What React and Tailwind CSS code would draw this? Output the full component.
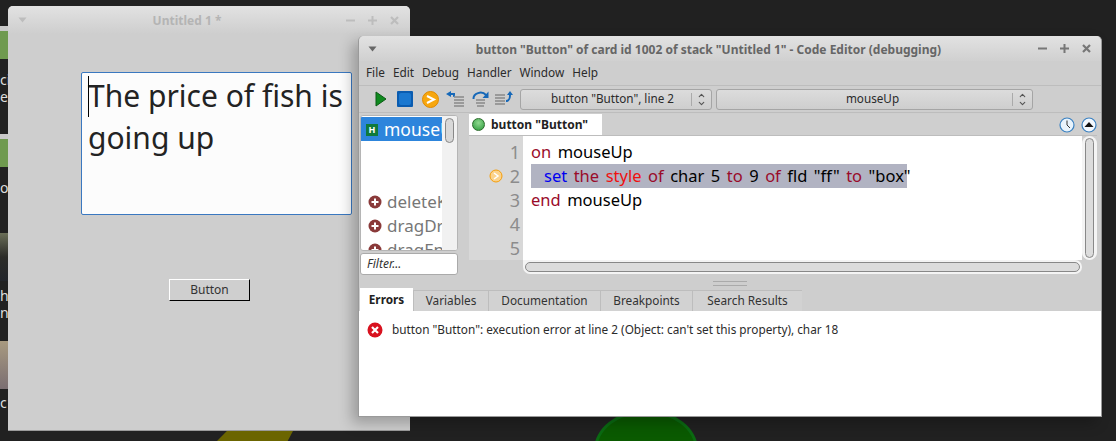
import React from "react";
import { ChevronDown, ChevronUp } from "lucide-react";

const noto = "font-['Noto_Sans',sans-serif]";

const WindowControls = ({ tone }) => (
  <div className={`flex items-center gap-[11px] ${tone}`}>
    <svg width="11" height="11" viewBox="0 0 11 11"><rect x="1" y="4.5" width="9" height="2" fill="currentColor" /></svg>
    <svg width="11" height="11" viewBox="0 0 11 11"><path d="M1 4.5h3.5V1h2v3.5H10v2H6.5V10h-2V6.5H1z" fill="currentColor" /></svg>
    <svg width="11" height="11" viewBox="0 0 11 11"><path d="M2 2l7 7M9 2l-7 7" stroke="currentColor" strokeWidth="2.2" /></svg>
  </div>
);

const MenuArrow = ({ color }) => (
  <svg width="9" height="6" viewBox="0 0 9 6"><path d="M0.5 0.5h8L4.5 5.5z" fill={color} /></svg>
);

const Stepper = () => (
  <div className="flex flex-col items-center text-[#555]">
    <ChevronUp size={9} strokeWidth={3} className="-mb-[1px]" />
    <ChevronDown size={9} strokeWidth={3} />
  </div>
);

const Select = ({ label, width, pad }) => (
  <div className={`flex h-[21px] items-center rounded-[3px] border border-[#a5a5a5] bg-gradient-to-b from-[#dcdcdc] to-[#cecece] ${width}`}>
    <span className={`flex-1 text-center text-[11.7px] text-[#2b2b2b] ${pad}`}>{label}</span>
    <div className="flex h-[13px] w-[20px] items-center justify-center border-l border-[#aaa]">
      <Stepper />
    </div>
  </div>
);

const ToolbarIcons = () => (
  <div className="flex w-[157px] items-center pl-[16px]">
    <svg width="12" height="16" viewBox="0 0 12 16"><path d="M1 1l10 7-10 7z" fill="#0f8a1f" stroke="#0b5c14" /></svg>
    <svg width="16" height="16" viewBox="0 0 16 16" className="ml-[10px]"><rect width="16" height="16" rx="1" fill="#0a5cb0" /><rect x="2" y="2" width="12" height="12" rx="2" fill="#1a78d0" /></svg>
    <svg width="17" height="17" viewBox="0 0 17 17" className="ml-[9px]"><circle cx="8.5" cy="8.5" r="8" fill="#f7a70f" stroke="#e08a00" /><path d="M5 5l7 3.500L5 12" fill="none" stroke="#fff" strokeWidth="2" /></svg>
    <svg width="19" height="17" viewBox="0 0 19 17" className="ml-[7px]">
      <path d="M8 6h10M8 9h10M8 12h10M8 15h10" stroke="#666" />
      <path d="M0 3l5-3v2h4v2c0 1-1 2-2 2V4H5v2z" fill="#1668b8" />
    </svg>
    <svg width="17" height="18" viewBox="0 0 17 18" className="ml-[7px]">
      <path d="M1.500 9a7 6 0 0 1 12.500-4" fill="none" stroke="#1668b8" strokeWidth="2" />
      <path d="M16.500 1.500v6.500h-6z" fill="#1668b8" />
      <path d="M4 10h9M4 13h9M5 16h7" stroke="#666" />
    </svg>
    <svg width="18" height="16" viewBox="0 0 18 16" className="ml-[6px]">
      <path d="M0 4h10M0 7h10M0 10h10M0 13h10" stroke="#666" />
      <path d="M11 9c3 0 3-3 3-5h-2l3-4 3 4h-2c0 4-2 7-5 7z" fill="#1668b8" />
    </svg>
  </div>
);

const HandlerRow = ({ label }) => (
  <div className="flex h-[24px] items-center gap-[5px] pl-[7px] text-[17px] text-[#777]">
    <svg width="14" height="14" viewBox="0 0 14 14" className="shrink-0">
      <circle cx="7" cy="7" r="6.5" fill="#8a3a3a" />
      <path d="M3.5 7h7M7 3.5v7" stroke="#fff" strokeWidth="2" />
    </svg>
    <span>{label}</span>
  </div>
);

const HandlerList = () => (
  <div className="relative mt-[1px] h-[136px] overflow-hidden rounded-[3px] border border-[#b5b5b5] bg-white pt-[1px]">
    <div className="flex h-[24px] w-[81px] items-center gap-[6px] overflow-hidden bg-[#2d85dc] pt-[1px] pl-[5px] text-[17.5px] whitespace-nowrap text-white">
      <span className="flex h-[12px] w-[12px] shrink-0 items-center justify-center bg-[#0f7a3c] text-[9px] leading-none font-bold">H</span>
      mouseUp
    </div>
    <div className="h-[49px]" />
    <div className="w-[81px] overflow-hidden whitespace-nowrap">
      <HandlerRow label="deleteKey" />
      <HandlerRow label="dragDrop" />
      <HandlerRow label="dragEnd" />
    </div>
    <div className="absolute top-0 right-0 bottom-0 w-[15px] bg-[#f1f1f1] p-[2px]">
      <div className="mx-auto h-[25px] w-[9px] rounded-full border border-[#888] bg-[#d8d8d8]" />
    </div>
  </div>
);

const Kw = ({ c, children }) => <span className={c}>{children}</span>;

const maroon = "text-[#9a0b2a]";

const CodeEditor = () => (
  <div className="flex flex-1 flex-col">
    <div className="flex h-[22px] items-stretch justify-between border-b border-[#bdbdbd] bg-[#cfcfcf]">
      <div className="flex w-[133px] items-center gap-[6px] bg-white pl-[3px] text-[12px] font-bold text-[#222]">
        <span className="h-[13px] w-[13px] rounded-full border border-[#2b6b2b] bg-[radial-gradient(circle_at_50%_35%,#8fd88f,#2a9a3a)]" />
        button "Button"
      </div>
      <div className="flex items-center gap-[6px]">
        <svg width="16" height="16" viewBox="0 0 16 16"><circle cx="8" cy="8" r="7" fill="#e8f3fc" stroke="#3a80c0" strokeWidth="1.2" /><path d="M8 3.5V8l3 3" fill="none" stroke="#333" /></svg>
        <svg width="16" height="16" viewBox="0 0 16 16"><circle cx="8" cy="8" r="7" fill="#f2f8fe" stroke="#3a80c0" strokeWidth="1.2" /><path d="M3.5 10L8 5l4.500 5z" fill="#111" /></svg>
      </div>
    </div>
    <div className="flex h-[138px]">
      <div className="flex flex-1 flex-col">
        <div className="flex flex-1">
          <div className="h-[124px] w-[54px] shrink-0 bg-[#d8d8d8] pt-[4px] text-[18px] leading-[24px] text-[#8c8c8c]">
            {[1, 2, 3, 4, 5].map((n) => (
              <div key={n} className="relative pr-[3px] text-right">
                {n}
                {n === 2 && (
                  <svg width="14" height="14" viewBox="0 0 14 14" className="absolute top-[5px] left-[20px]">
                    <circle cx="7" cy="7" r="6" fill="#fbd38d" stroke="#f59e0b" />
                    <path d="M5 4l4 3-4 3" fill="none" stroke="#fff" strokeWidth="1.5" />
                  </svg>
                )}
              </div>
            ))}
          </div>
          <div className="flex-1 bg-white pt-[4px] pl-[8px] text-[16.5px] leading-[24px] [word-spacing:2.2px] whitespace-pre text-black">
            <div><Kw c={maroon}>on</Kw> mouseUp</div>
            <div className="w-[376px] bg-[#b1b3c2]">
              {"  "}<Kw c="text-[#0000f0]">set</Kw> <Kw c={maroon}>the</Kw> <Kw c="text-[#f01010]">style</Kw> <Kw c={maroon}>of</Kw> char 5 <Kw c={maroon}>to</Kw> 9 <Kw c={maroon}>of</Kw> fld "ff" <Kw c={maroon}>to</Kw> "box"
            </div>
            <div><Kw c={maroon}>end</Kw> mouseUp</div>
          </div>
        </div>
        <div className="ml-[54px] h-[14px] rounded-r-full rounded-bl-full bg-[#f4f4f4] p-[2px]">
          <div className="h-[10px] rounded-full border border-[#888] bg-[#dcdcdc]" />
        </div>
      </div>
      <div className="h-[124px] w-[15px] rounded-full bg-[#f4f4f4] p-[2px]">
        <div className="mx-auto h-full w-[9px] rounded-full border border-[#888] bg-[#dcdcdc]" />
      </div>
    </div>
  </div>
);

const Tab = ({ label, active, width }) => (
  <div className={`flex items-center justify-center text-[11.8px] ${width} ${active ? "h-[23px] bg-white font-bold text-[#222]" : "h-[21px] border-t border-l border-[#bdbdbd] bg-[#d2d2d2] text-[#333]"}`}>
    {label}
  </div>
);

const LeftEdgeScraps = () => (
  <div className="absolute inset-0 overflow-hidden text-[14px] leading-[20px] text-[#ddd]">
    <div className="absolute top-[26px] left-0 h-[33px] w-[8px] border-t-[5px] border-[#c9c9c9] bg-[#6f9a4f]" />
    <div className="absolute top-[70px] left-0">ci</div>
    <div className="absolute top-[87px] left-0">e</div>
    <div className="absolute top-[134px] left-0 h-[33px] w-[8px] border-t-[5px] border-[#c9c9c9] bg-[#6f9a4f]" />
    <div className="absolute top-[178px] left-0">oc</div>
    <div className="absolute top-[233px] left-0 h-[48px] w-[8px] bg-gradient-to-b from-[#6b6f58] via-[#2c2c28] to-[#22252b]" />
    <div className="absolute top-[286px] left-0">he</div>
    <div className="absolute top-[303px] left-0">n</div>
    <div className="absolute top-[341px] left-0 h-[48px] w-[8px] bg-gradient-to-b from-[#a89a80] to-[#7b6f72]" />
    <div className="absolute top-[393px] left-0">c1</div>
    {/* shapes from the wallpaper */}
    <div className="absolute top-[431px] left-[217px] h-[10px] w-[76px] bg-[#6b6500] [clip-path:polygon(13%_0,100%_0,93%_100%,0_100%)]" />
    <div className="absolute top-[410px] left-[594px] h-[80px] w-[104px] rounded-[50%] border-[3px] border-[#0b6a12] bg-[#0a5a00]" />
  </div>
);

export default function App() {
  return (
    <div className={`relative h-[441px] w-[1116px] overflow-hidden bg-[#212121] ${noto}`}>
      <LeftEdgeScraps />

      {/* Stack window */}
      <div className="absolute top-[6px] left-[8px] flex h-[425px] w-[402px] flex-col rounded-t-[5px] border-b border-[#9a9a9a] bg-[#cecece]">
        <div className="flex h-[28px] items-center justify-between rounded-t-[5px] bg-gradient-to-b from-[#e2e2e2] to-[#cecece] px-[10px]">
          <MenuArrow color="#bdbdbd" />
          <span className="mt-[2px] ml-[2px] text-[12px] font-bold text-[#b4b4b4]">Untitled 1 *</span>
          <WindowControls tone="text-[#bdbdbd]" />
        </div>
        <div className="mt-[38px] ml-[73px] h-[143px] w-[271px] rounded-[2px] border border-[#3a78c0] bg-[#fcfcfc] pt-[2px] pl-[6px]">
          <div className="relative text-[30px] leading-[42px] text-[#232323]">
            <span className="absolute top-[1px] left-0 h-[41px] w-[1px] bg-black" />
            The price of fish is going up
          </div>
        </div>
        <div className="mt-[64px] ml-[161px] flex h-[22px] w-[81px] items-center justify-center border border-t-white border-r-black border-b-black border-l-white bg-[#cfcfcf] text-[12px] text-[#333]">
          Button
        </div>
      </div>

      {/* Code editor window */}
      <div className="absolute top-[36px] left-[358px] flex h-[381px] w-[744px] flex-col rounded-t-[5px] border-x border-b border-[#9a9a9a] bg-[#cecece] shadow-[-6px_6px_14px_rgba(0,0,0,0.25)]">
        <div className="flex h-[25px] items-center justify-between rounded-t-[5px] bg-gradient-to-b from-[#e2e2e2] to-[#d0d0d0] pr-[9px] pl-[9px]">
          <MenuArrow color="#666" />
          <span className="mt-[2px] ml-[3px] text-[12px] font-bold text-[#666]">button "Button" of card id 1002 of stack "Untitled 1" - Code Editor (debugging)</span>
          <WindowControls tone="text-[#777]" />
        </div>
        <div className="flex h-[25px] items-center gap-[8px] border-b border-[#bdbdbd] pl-[7px] text-[11.8px] text-[#2b2b2b]">
          {["File", "Edit", "Debug", "Handler", "Window", "Help"].map((m) => <span key={m}>{m}</span>)}
        </div>
        <div className="flex h-[27px] items-center border-b border-[#bdbdbd]">
          <ToolbarIcons />
          <div className="flex gap-[4px] pl-[4px]">
            <Select label={'button "Button", line 2'} width="w-[192px]" pad="pl-[13px]" />
            <Select label="mouseUp" width="w-[317px]" pad="pl-[16px]" />
          </div>
        </div>
        <div className="flex gap-[11px] pt-[1px] pr-[4px] pl-[1px]">
          <div className="w-[98px]">
            <HandlerList />
            <div className="mt-[2px] flex h-[22px] items-center rounded-[3px] border border-[#aaa] bg-white pl-[6px] text-[12px] text-[#333] italic">Filter...</div>
          </div>
          <CodeEditor />
        </div>
        <div className="mx-auto mt-[6px] flex h-[5px] w-[34px] flex-col justify-between border-y border-[#aaa]" />
        <div className="mt-[3px] flex h-[22px] items-end pl-[1px]">
          <Tab label="Errors" active width="w-[53px]" />
          <Tab label="Variables" width="w-[75px]" />
          <Tab label="Documentation" width="w-[112px]" />
          <Tab label="Breakpoints" width="w-[92px]" />
          <Tab label="Search Results" width="w-[110px]" />
        </div>
        <div className="flex flex-1 items-start gap-[9px] bg-white pt-[10px] pl-[8px] text-[11.8px] text-[#2b2b2b]">
          <svg width="16" height="16" viewBox="0 0 16 16" className="mt-[1px]">
            <circle cx="8" cy="8" r="7.500" fill="#d8121f" />
            <path d="M5 5l6 6M11 5l-6 6" stroke="#fff" strokeWidth="2.200" />
          </svg>
          <span>button "Button": execution error at line 2 (Object: can't set this property), char 18</span>
        </div>
      </div>
    </div>
  );
}
